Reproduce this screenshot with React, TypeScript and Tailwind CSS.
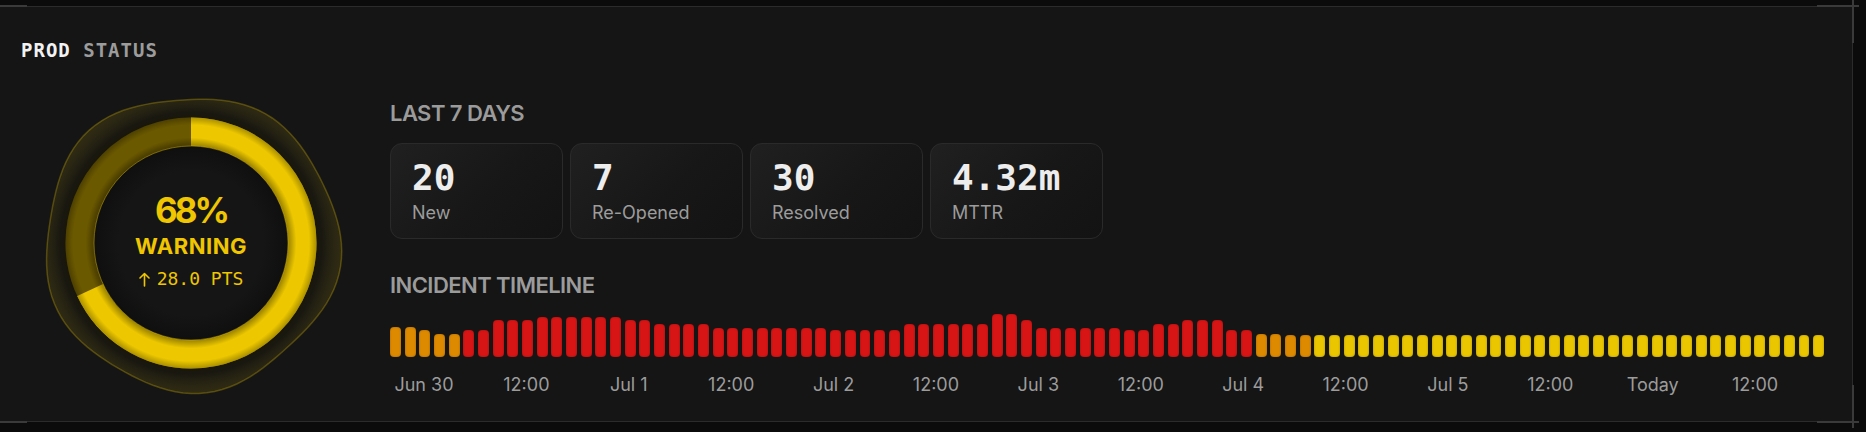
import React from "react";

// bar colours by level
const COLOR: Record<string, string> = {
  o: "bg-[#de8a00]",
  r: "bg-[#d71515]",
  y: "bg-[#e9c600]",
};

type Bar = { h: number; c: string };

const seg = (n: number, h: number, c: string): Bar[] =>
  Array.from({ length: n }, () => ({ h, c }));

// 98 buckets, 7 per 12h
const BARS: Bar[] = [
  ...seg(2, 30, "o"),
  ...seg(1, 27, "o"),
  ...seg(2, 23, "o"),
  ...seg(2, 27, "r"),
  ...seg(3, 37, "r"),
  ...seg(6, 40, "r"),
  ...seg(2, 37, "r"),
  ...seg(4, 33, "r"),
  ...seg(8, 29, "r"),
  ...seg(5, 27, "r"),
  ...seg(6, 33, "r"),
  ...seg(2, 43, "r"),
  ...seg(1, 37, "r"),
  ...seg(6, 29, "r"),
  ...seg(2, 27, "r"),
  ...seg(2, 33, "r"),
  ...seg(3, 37, "r"),
  ...seg(2, 27, "r"),
  ...seg(2, 23, "o"),
  ...seg(2, 22, "o"),
  ...seg(35, 22, "y"),
];

const TICKS = [
  "Jun 30", "12:00", "Jul 1", "12:00", "Jul 2", "12:00", "Jul 3",
  "12:00", "Jul 4", "12:00", "Jul 5", "12:00", "Today", "12:00",
];

const STATS = [
  { value: "20", label: "New" },
  { value: "7", label: "Re-Opened" },
  { value: "30", label: "Resolved" },
  { value: "4.32m", label: "MTTR" },
];

// wobbly halo behind the gauge
function blobPath() {
  const pts: string[] = [];
  const n = 120;
  for (let i = 0; i <= n; i++) {
    const t = (i / n) * Math.PI * 2;
    const r = 147 + 3.5 * Math.sin(5 * t + 0.6) + 1.5 * Math.sin(3 * t + 2);
    const x = 160 + r * Math.cos(t);
    const y = 160 + r * Math.sin(t);
    pts.push(`${i === 0 ? "M" : "L"}${x.toFixed(2)} ${y.toFixed(2)}`);
  }
  return pts.join(" ") + " Z";
}

function Gauge({ pct }: { pct: number }) {
  const r = 111.25;
  const c = 2 * Math.PI * r;
  return (
    <div className="grid h-[320px] w-[320px]">
      <svg
        width="320"
        height="320"
        viewBox="0 0 320 320"
        className="overflow-visible [grid-area:1/1]"
      >
        <defs>
          <radialGradient id="halo" gradientUnits="userSpaceOnUse" cx="160" cy="160" r="152">
            <stop offset="0.7" stopColor="#000" stopOpacity="0.35" />
            <stop offset="0.86" stopColor="#e9c600" stopOpacity="0.05" />
            <stop offset="1" stopColor="#e9c600" stopOpacity="0.13" />
          </radialGradient>
          <radialGradient id="tube" gradientUnits="userSpaceOnUse" cx="160" cy="160" r="125.5">
            <stop offset="0.773" stopColor="#000" stopOpacity="0.35" />
            <stop offset="0.84" stopColor="#000" stopOpacity="0" />
            <stop offset="0.94" stopColor="#000" stopOpacity="0" />
            <stop offset="1" stopColor="#000" stopOpacity="0.28" />
          </radialGradient>
          <radialGradient id="core" gradientUnits="userSpaceOnUse" cx="160" cy="160" r="97">
            <stop offset="0.75" stopColor="#151515" />
            <stop offset="1" stopColor="#0f0f0f" />
          </radialGradient>
          <filter id="soft" x="-30%" y="-30%" width="160%" height="160%">
            <feGaussianBlur stdDeviation="7" />
          </filter>
        </defs>

        <path d={blobPath()} fill="url(#halo)" stroke="#e9c600" strokeOpacity="0.28" strokeWidth="1.5" />
        <circle cx="160" cy="160" r={r} fill="none" stroke="#000" strokeOpacity="0.55" strokeWidth="36" filter="url(#soft)" />

        <circle cx="160" cy="160" r={r} fill="none" stroke="#6b5900" strokeWidth="28.5" />
        <circle
          cx="160"
          cy="160"
          r={r}
          fill="none"
          stroke="#edc800"
          strokeWidth="28.5"
          strokeDasharray={`${(pct / 100) * c} ${c}`}
          transform="rotate(-90 160 160)"
        />
        <circle cx="160" cy="160" r={r} fill="none" stroke="url(#tube)" strokeWidth="28.5" />
        <circle cx="160" cy="160" r="97" fill="url(#core)" stroke="#edc800" strokeOpacity="0.45" strokeWidth="1" />
      </svg>

      <div className="flex flex-col items-center justify-center [grid-area:1/1] text-[#efc600]">
        <div className="-mt-[4px] flex flex-col items-center">
          <div className="font-['Inter',sans-serif] text-[35px] leading-none font-bold tracking-[-3px]">68%</div>
          <div className="mt-[7px] font-['Inter',sans-serif] text-[22px] leading-none font-bold tracking-wide">WARNING</div>
          <div className="mt-[13px] flex items-center gap-[7px] font-['DejaVu_Sans_Mono',monospace] text-[18px] leading-none">
            <svg width="11" height="15" viewBox="0 0 11 15" fill="none" stroke="currentColor" strokeWidth="1.6" strokeLinecap="round" strokeLinejoin="round">
              <path d="M5.5 14V1.5M1 6l4.5-4.5L10 6" />
            </svg>
            <span>28.0 PTS</span>
          </div>
        </div>
      </div>
    </div>
  );
}

export default function App() {
  return (
    <div className="min-h-screen bg-[#0b0b0b] pt-[6px]">
      <div className="relative h-[416px] w-[1853px] border-y border-r border-[#2b2b2b] bg-[#151515] pl-[21px] pt-[33.5px]">
        {/* corner ticks */}
        <span className="absolute -top-[2px] left-0 h-[2px] w-[27px] bg-[#3a3a3a]" />
        <span className="absolute -bottom-[2px] left-0 h-[2px] w-[27px] bg-[#3a3a3a]" />
        <span className="absolute -top-[2px] -right-[7px] h-[2px] w-[42px] bg-[#3a3a3a]" />
        <span className="absolute -top-[7px] -right-[2px] h-[43px] w-[2px] bg-[#3a3a3a]" />
        <span className="absolute -bottom-[2px] -right-[7px] h-[2px] w-[42px] bg-[#3a3a3a]" />
        <span className="absolute -bottom-[7px] -right-[2px] h-[43px] w-[2px] bg-[#3a3a3a]" />

        <div className="font-['DejaVu_Sans_Mono',monospace] text-[19px] leading-[19px] font-bold tracking-[1px]">
          <span className="text-[#f2f2f2]">PROD</span>{" "}
          <span className="text-[#9c9c9c]">STATUS</span>
        </div>

        <div className="mt-[23px] flex">
          <div className="w-[369px] shrink-0">
            <div className="ml-[10px]">
              <Gauge pct={68} />
            </div>
          </div>

          <div className="pt-[19.5px] font-['Inter',sans-serif]">
            <div className="text-[22px] leading-none font-semibold tracking-tight text-[#9b9b9b]">LAST 7 DAYS</div>

            <div className="mt-[19.3px] flex gap-[7px]">
              {STATS.map((s) => (
                <div
                  key={s.label}
                  className="h-[96px] w-[173px] rounded-[12px] border border-[#2a2a2a] bg-[linear-gradient(135deg,#202020_0%,#171717_55%,#131313_100%)] pl-[21px] pt-[15.5px]"
                >
                  <div className="font-['DejaVu_Sans_Mono',monospace] text-[36px] leading-none font-bold text-[#ededed]">
                    {s.value}
                  </div>
                  <div className="mt-[8.5px] text-[18px] leading-none text-[#9c9c9c]">{s.label}</div>
                </div>
              ))}
            </div>

            <div className="mt-[35px] text-[22px] leading-none font-semibold tracking-tight text-[#9b9b9b]">INCIDENT TIMELINE</div>

            <div className="mt-[17.4px] flex h-[43px] w-[1434px] items-end gap-[3.7px]">
              {BARS.map((b, i) => (
                <div
                  key={i}
                  className={`flex-1 rounded-[4px] shadow-[inset_0_0_2px_rgba(0,0,0,0.35)] ${COLOR[b.c]}`}
                  style={{ height: b.h }}
                />
              ))}
            </div>

            <div className="-ml-[17.2px] mt-[19.2px] flex">
              {TICKS.map((t, i) => (
                <div key={i} className="w-[102.4px] shrink-0 text-center text-[18px] leading-none text-[#9c9c9c]">
                  {t}
                </div>
              ))}
            </div>
          </div>
        </div>
      </div>
    </div>
  );
}
